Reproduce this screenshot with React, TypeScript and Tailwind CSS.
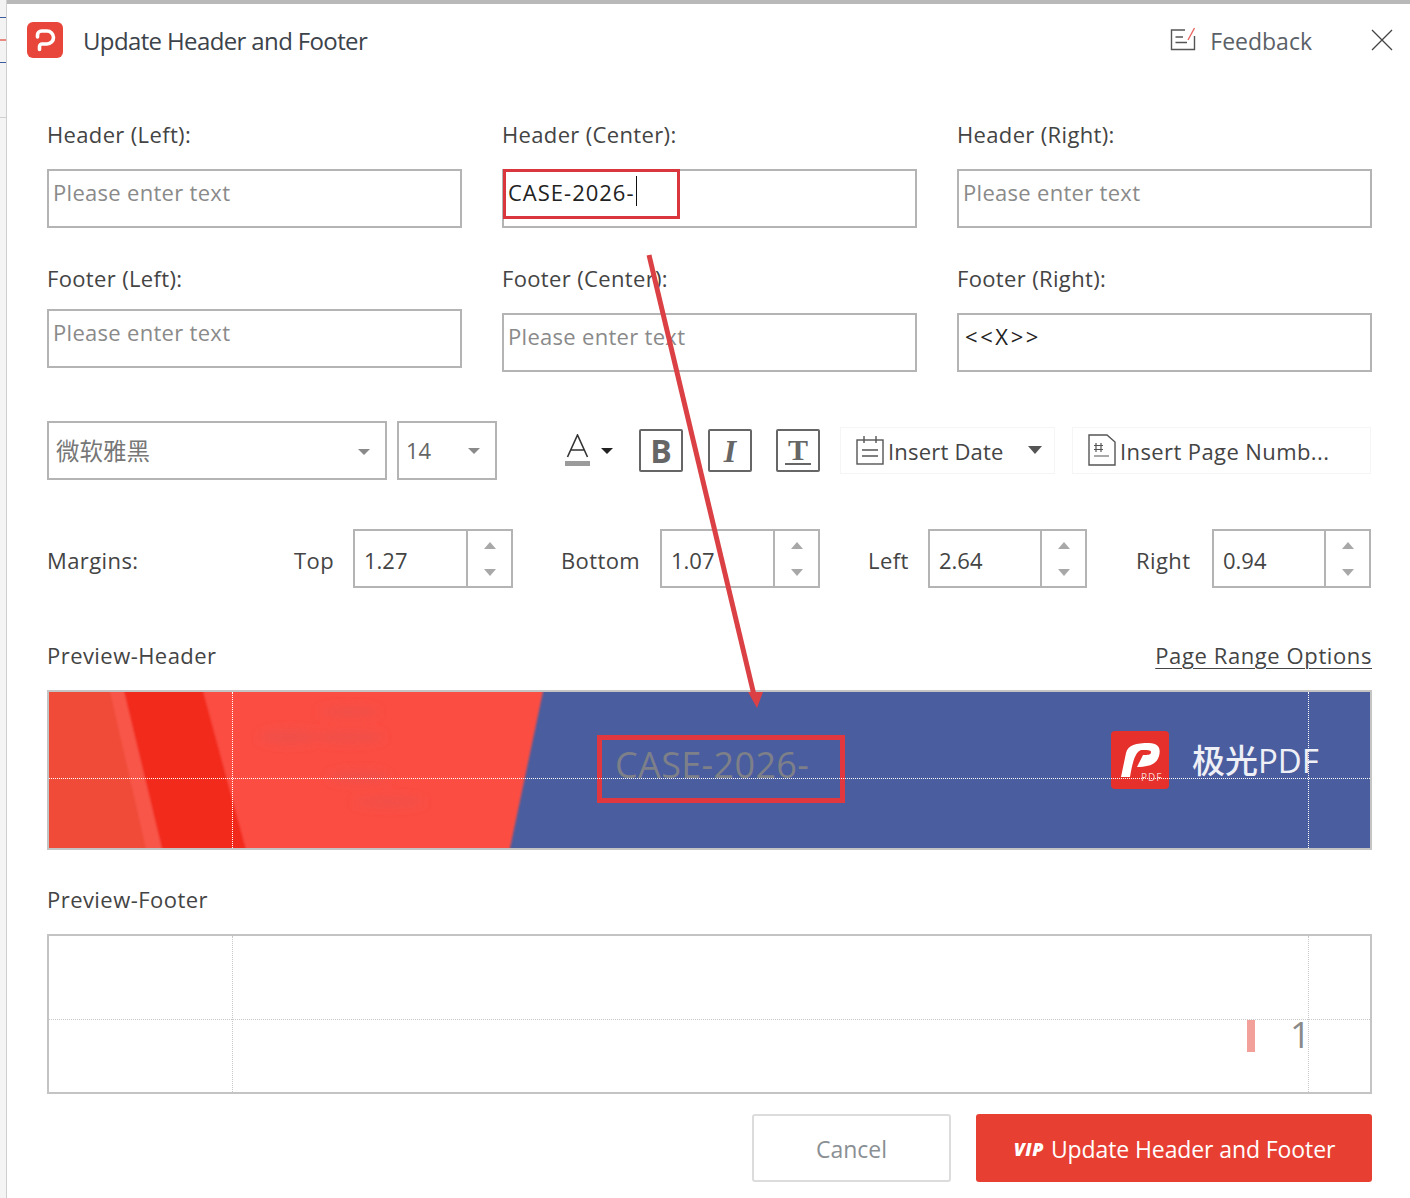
import React from 'react';

const ui = "font-['Open_Sans','Noto_Sans_CJK_SC',sans-serif]";

const Field = ({ label, value, gap = 'mt-[19px]', valueClass = 'tracking-[1px]', children }: { label: string; value?: string; gap?: string; valueClass?: string; children?: React.ReactNode }) => (
  <div className="w-[415px]">
    <div className="h-[30px] pb-[2px] flex items-center text-[22px] tracking-[0.35px] text-[#444]">{label}</div>
    <div className={`relative h-[59px] border-2 border-[#b4b4b4] px-[4px] pt-[5px] text-[22px] leading-[32px] ${gap} ${value ? `text-[#222] ${valueClass}` : 'text-[#8a8a8a] tracking-[0.3px]'}`}>
      {value || 'Please enter text'}
      {children}
    </div>
  </div>
);

const Spinner = ({ label, value, width, labelWidth }: { label: string; value: string; width: string; labelWidth: string }) => (
  <div className="flex items-center gap-[21px]">
    <span className={`pt-[3px] text-[22px] tracking-[0.4px] whitespace-nowrap text-[#444] ${labelWidth}`}>{label}</span>
    <div className={`flex h-[59px] border-2 border-[#b4b4b4] ${width}`}>
      <div className="flex-1 flex items-center pt-[3px] pl-[9px] text-[22px] text-[#444]">{value}</div>
      <div className="w-[45px] border-l-2 border-[#b4b4b4] flex flex-col items-center justify-center gap-[20px]">
        <span className="w-0 h-0 border-x-[6px] border-x-transparent border-b-[7px] border-b-[#a8a8a8]" />
        <span className="w-0 h-0 border-x-[6px] border-x-transparent border-t-[7px] border-t-[#a8a8a8]" />
      </div>
    </div>
  </div>
);

const StyleBtn = ({ children, className = '' }: { children: React.ReactNode; className?: string }) => (
  <div className={`w-[44px] h-[43px] border-2 border-[#666] rounded-[2px] flex items-center justify-center text-[#666] ${className}`}>{children}</div>
);

const Guides = ({ color, y }: { color: string; y: string }) => (
  <>
    <div className={`absolute top-0 bottom-0 left-[183px] border-l border-dotted ${color}`} />
    <div className={`absolute top-0 bottom-0 left-[1259px] border-l border-dotted ${color}`} />
    <div className={`absolute left-0 right-0 border-t border-dotted ${y} ${color}`} />
  </>
);

export default function App() {
  return (
    <div className={`relative w-[1410px] h-[1198px] overflow-hidden flex bg-white ${ui}`}>
      {/* bit of the window behind the dialog */}
      <div className="w-[7px] flex flex-col border-r border-[#cfcfcf]">
        <div className="h-[118px] bg-[#f3f3f3] border-b border-[#d0d0d0] pt-[17px]">
          <div className="h-px bg-[#3b5c9c]" />
          <div className="h-[2px] mt-[21px] bg-[#e88a80]" />
          <div className="h-px mt-[21px] bg-[#3b5c9c]" />
        </div>
        <div className="flex-1 bg-[#f4f4f4]" />
      </div>

      <div className="flex-1 flex flex-col">
        <div className="h-[4px] bg-[#b9b9b9]" />

        <div className="h-[76px] flex items-center pl-[20px] pr-[17px]">
          <svg width="36" height="36" viewBox="0 0 36 36" className="-mt-[4px]">
            <rect width="36" height="36" rx="6" fill="#e8463a" />
            <path d="M10.5 15 V13 a4 4 0 0 1 4-4 H20 a6.5 6.5 0 0 1 0 13 H15 a2.5 2.5 0 0 0 -2.5 2.5 V27.5" fill="none" stroke="#fff" strokeWidth="3.6" strokeLinecap="round" />
          </svg>
          <span className="ml-[20px] -mt-[3px] text-[24px] tracking-[-0.63px] text-[#3c434a]">Update Header and Footer</span>
          <svg width="26" height="26" viewBox="0 0 26 26" className="ml-auto -mt-[7px]" fill="none">
            <path d="M15 4 H1.5 V23.5 H24.5 V10" stroke="#555" strokeWidth="1.4" />
            <path d="M5.5 11 H13 M5.5 16.5 H17" stroke="#555" strokeWidth="1.4" />
            <path d="M18 14 L24.5 2" stroke="#e8655f" strokeWidth="1.4" />
          </svg>
          <span className="ml-[14px] -mt-[2px] text-[23px] text-[#5b6167]">Feedback</span>
          <svg width="22" height="22" viewBox="0 0 22 22" className="ml-[59px] -mt-[4px]" fill="none">
            <path d="M1 1 L21 21 M21 1 L1 21" stroke="#444" strokeWidth="1.3" />
          </svg>
        </div>

        <div className="pl-[40px] w-[1365px]">
          <div className="mt-[40px] flex gap-[40px]">
            <Field label="Header (Left):" />
            <Field label="Header (Center):" value="CASE-2026-">
              <span className="absolute left-[132px] top-[5px] w-px h-[30px] bg-[#111]" />
              <span className="absolute -left-[1px] -top-[2px] w-[177px] h-[50px] border-[3px] border-[#d9363e]" />
            </Field>
            <Field label="Header (Right):" />
          </div>

          <div className="mt-[36px] flex gap-[40px]">
            <Field label="Footer (Left):" gap="mt-[15px]" />
            <Field label="Footer (Center):" />
            <Field label="Footer (Right):" value="<<X>>" valueClass="pl-[6px] tracking-[2.6px]" />
          </div>

          <div className="mt-[49px] h-[59px] flex items-center">
            <div className="w-[340px] h-[59px] border-2 border-[#b4b4b4] flex items-center pl-[7px] pr-[15px] pt-[3px] text-[23.5px] text-[#777]">
              微软雅黑
              <span className="ml-auto w-0 h-0 border-x-[6px] border-x-transparent border-t-[6px] border-t-[#8a8a8a]" />
            </div>
            <div className="ml-[10px] w-[100px] h-[59px] border-2 border-[#b4b4b4] flex items-center pl-[7px] pr-[15px] text-[22px] text-[#666]">
              14
              <span className="ml-auto w-0 h-0 border-x-[6px] border-x-transparent border-t-[6px] border-t-[#8a8a8a]" />
            </div>
            <svg width="26" height="34" viewBox="0 0 26 34" className="ml-[68px]" fill="none">
              <path d="M2.5 23 L12.5 1 L22.5 23 M6 16 H19" stroke="#333" strokeWidth="1.6" />
              <rect x="0" y="27" width="25" height="5" fill="#9b9b9b" />
            </svg>
            <span className="ml-[10px] w-0 h-0 border-x-[6px] border-x-transparent border-t-[6px] border-t-[#222]" />
            <StyleBtn className="ml-[26px] text-[32px] font-bold">B</StyleBtn>
            <StyleBtn className="ml-[25px] text-[32px] font-bold italic font-['Liberation_Serif',serif]">I</StyleBtn>
            <StyleBtn className="ml-[24px]">
              <span className="text-[30px] leading-[26px] font-bold border-b-2 border-[#666] px-[3px] font-['Liberation_Serif',serif]">T</span>
            </StyleBtn>
            <div className="ml-[20px] w-[215px] h-[47px] border border-[#f5f5f5] flex items-center pl-[15px] pt-[1px] text-[22px] tracking-[0.2px] text-[#444]">
              <svg width="28" height="30" viewBox="0 0 28 30" fill="none" className="mr-[4px] -mt-[2px]">
                <rect x="1" y="5" width="26" height="24" stroke="#555" strokeWidth="1.4" />
                <path d="M8 1 V8 M20 1 V8 M6 15 H22 M6 21 H22" stroke="#555" strokeWidth="1.4" />
              </svg>
              Insert Date
              <span className="ml-[24px] -mt-[3px] w-0 h-0 border-x-[7px] border-x-transparent border-t-[8px] border-t-[#555]" />
            </div>
            <div className="ml-[17px] w-[299px] h-[47px] border border-[#f5f5f5] flex items-center pl-[15px] pt-[1px] text-[22px] tracking-[0.4px] text-[#444]">
              <svg width="28" height="32" viewBox="0 0 28 32" fill="none" className="mr-[4px] -mt-[2px]">
                <path d="M1 1 H19 L27 8 V31 H1 Z" stroke="#555" strokeWidth="1.4" />
                <path d="M8 9 V18 M13 9 V18 M6 11.5 H15 M6 15.5 H15 M6 22 H21" stroke="#555" strokeWidth="1.2" />
              </svg>
              Insert Page Numb...
            </div>
          </div>

          <div className="mt-[49px] h-[59px] flex items-center pr-[1px]">
            <span className="mr-auto pt-[3px] text-[22px] tracking-[0.4px] text-[#444]">Margins:</span>
            <div className="flex items-center gap-[48px]">
              <Spinner label="Top" value="1.27" width="w-[160px]" labelWidth="w-[38px]" />
              <Spinner label="Bottom" value="1.07" width="w-[160px]" labelWidth="w-[78px]" />
              <Spinner label="Left" value="2.64" width="w-[159px]" labelWidth="w-[39px]" />
              <Spinner label="Right" value="0.94" width="w-[159px]" labelWidth="w-[56px] pl-[1px]" />
            </div>
          </div>

          <div className="mt-[53px] h-[30px] pb-[2px] flex items-center justify-between text-[22px] tracking-[0.45px] text-[#444]">
            <span>Preview-Header</span>
            <span className="underline underline-offset-[4px] decoration-1 tracking-[0.6px]">Page Range Options</span>
          </div>

          {/* header preview, the banner is a picture in the reference */}
          <div className="relative mt-[19px] h-[160px] border-2 border-[#c4c4c4] overflow-hidden bg-[#4a5d9f]">
            <svg viewBox="0 0 1322 156" width="1322" height="156" className="block">
              <defs>
                <filter id="soft"><feGaussianBlur stdDeviation="1.2" /></filter>
                <filter id="softer"><feGaussianBlur stdDeviation="5" /></filter>
              </defs>
              <g filter="url(#soft)">
                <polygon points="-5,-5 495,-5 460,161 -5,161" fill="#fb4e43" />
                <polygon points="-5,-5 70,-5 105,161 -5,161" fill="#f04c37" />
                <polygon points="60,-5 76,-5 118,161 98,161" fill="#f8564a" />
                <polygon points="74,-5 153,-5 198,161 114,161" fill="#f2291e" />
              </g>
              <g filter="url(#softer)" fill="#f0504a">
                <ellipse cx="240" cy="45" rx="30" ry="7" />
                <ellipse cx="300" cy="45" rx="35" ry="6" />
                <ellipse cx="310" cy="85" rx="30" ry="6" />
                <ellipse cx="340" cy="110" rx="35" ry="5" />
                <ellipse cx="300" cy="20" rx="30" ry="5" />
              </g>
            </svg>
            <span className="absolute left-[566px] top-[50px] text-[36px] leading-[46px] tracking-[0.35px] text-[#7d8088]">CASE-2026-</span>
            <span className="absolute left-[548px] top-[43px] w-[248px] h-[68px] border-[5px] border-[#e0383e]" />
            <svg width="58" height="58" viewBox="0 0 58 58" className="absolute left-[1062px] top-[39px]">
              <rect width="58" height="58" rx="4" fill="#e5302c" />
              <path d="M10 46 L15 22 C17 14 25 12 38 12 C48 12 50 18 48 25 C46 33 38 36 26 36 L32 24 C37 24 40 24 40 21 C40 19 36 19 30 19 C25 21 22 28 19 46 Z" fill="#fff" />
              <text x="30" y="50" fontSize="10" fill="#f6cfcb" letterSpacing="1">PDF</text>
            </svg>
            <span className="absolute left-[1143px] top-[47px] text-[33px] leading-[44px] text-[#eef0f6] font-medium">极光PDF</span>
            <Guides color="border-white" y="top-[86px]" />
          </div>

          <div className="mt-[35px] h-[30px] pb-[2px] flex items-center text-[22px] tracking-[0.45px] text-[#444]">Preview-Footer</div>

          <div className="relative mt-[19px] h-[160px] border-2 border-[#c4c4c4] overflow-hidden">
            <Guides color="border-[#c8c8c8]" y="top-[83px]" />
            <span className="absolute left-[1198px] top-[84px] w-[8px] h-[32px] bg-[#f4a09a]" />
            <span className="absolute left-[1241px] top-[74px] text-[36px] leading-[50px] text-[#8a8a8a]">1</span>
          </div>

          <div className="mt-[20px] flex justify-end gap-[25px]">
            <div className="w-[199px] h-[68px] border-2 border-[#dcdcdc] rounded-[3px] flex items-center justify-center pt-[2px] text-[23px] text-[#8a8f94]">Cancel</div>
            <div className="w-[396px] h-[68px] rounded-[3px] bg-[#e83f33] flex items-center justify-center gap-[7px] pt-[2px] pl-[1px] text-[23px] tracking-[-0.1px] text-white">
              <span className="text-[18px] font-black italic tracking-[0.5px]">VIP</span>
              Update Header and Footer
            </div>
          </div>
        </div>
      </div>

      {/* annotation arrow over the dialog */}
      <svg width="1410" height="1198" className="absolute left-0 top-0 pointer-events-none">
        <path d="M649 255 L754 695" stroke="#db4045" strokeWidth="5" />
        <polygon points="748,692 763,692 757,708" fill="#db4045" />
      </svg>
    </div>
  );
}
